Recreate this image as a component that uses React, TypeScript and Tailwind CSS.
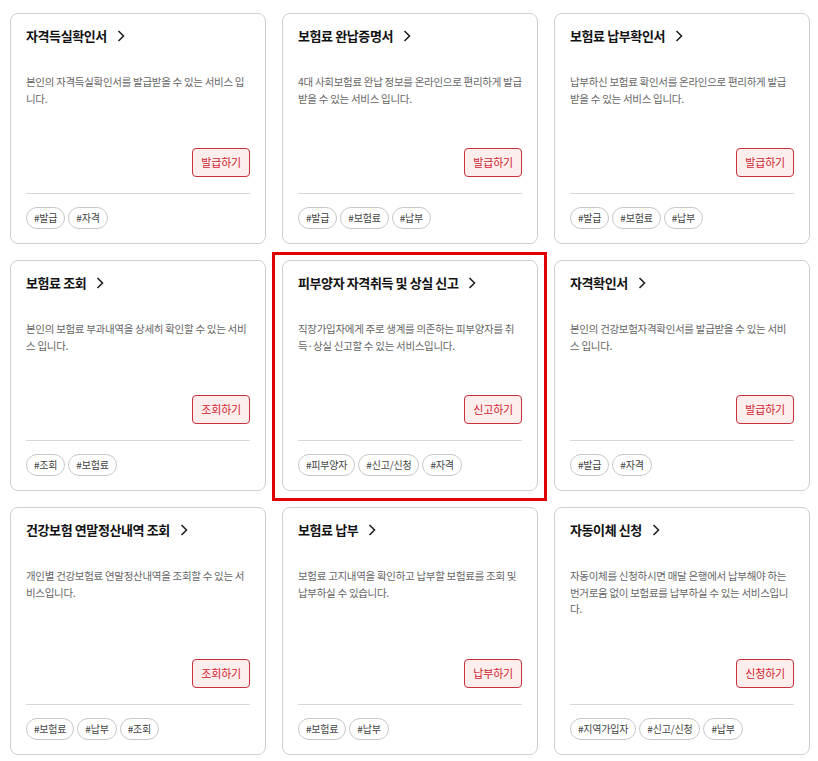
import { ReactNode } from 'react';

type Service = {
  title: string;
  desc: string;
  action: string;
  tags: string[];
  highlight?: boolean;
};

const services: Service[] = [
  { title: '자격득실확인서', desc: '본인의 자격득실확인서를 발급받을 수 있는 서비스 입니다.', action: '발급하기', tags: ['#발급', '#자격'] },
  { title: '보험료 완납증명서', desc: '4대 사회보험료 완납 정보를 온라인으로 편리하게 발급받을 수 있는 서비스 입니다.', action: '발급하기', tags: ['#발급', '#보험료', '#납부'] },
  { title: '보험료 납부확인서', desc: '납부하신 보험료 확인서를 온라인으로 편리하게 발급받을 수 있는 서비스 입니다.', action: '발급하기', tags: ['#발급', '#보험료', '#납부'] },
  { title: '보험료 조회', desc: '본인의 보험료 부과내역을 상세히 확인할 수 있는 서비스 입니다.', action: '조회하기', tags: ['#조회', '#보험료'] },
  { title: '피부양자 자격취득 및 상실 신고', desc: '직장가입자에게 주로 생계를 의존하는 피부양자를 취득·상실 신고할 수 있는 서비스입니다.', action: '신고하기', tags: ['#피부양자', '#신고/신청', '#자격'], highlight: true },
  { title: '자격확인서', desc: '본인의 건강보험자격확인서를 발급받을 수 있는 서비스 입니다.', action: '발급하기', tags: ['#발급', '#자격'] },
  { title: '건강보험 연말정산내역 조회', desc: '개인별 건강보험료 연말정산내역을 조회할 수 있는 서비스입니다.', action: '조회하기', tags: ['#보험료', '#납부', '#조회'] },
  { title: '보험료 납부', desc: '보험료 고지내역을 확인하고 납부할 보험료를 조회 및 납부하실 수 있습니다.', action: '납부하기', tags: ['#보험료', '#납부'] },
  { title: '자동이체 신청', desc: '자동이체를 신청하시면 매달 은행에서 납부해야 하는 번거로움 없이 보험료를 납부하실 수 있는 서비스입니다.', action: '신청하기', tags: ['#지역가입자', '#신고/신청', '#납부'] },
];

function Chevron() {
  return (
    <svg width="8" height="12" viewBox="0 0 8 12" className="ml-[10px] shrink-0">
      <polyline points="1.5,1 6.5,6 1.5,11" fill="none" stroke="#222" strokeWidth="1.6" />
    </svg>
  );
}

function Tag({ children }: { children: ReactNode }) {
  return (
    <span className="h-[22px] px-[7px] flex items-center rounded-full border border-[#c8c8c8] text-[10px] text-[#444] leading-none tracking-[-0.2px]">
      {children}
    </span>
  );
}

function ServiceCard({ s }: { s: Service }) {
  return (
    <div className="relative flex flex-col bg-white border border-[#cfcfcf] rounded-[8px] px-[15px] pt-[12px] pb-[14px]">
      {s.highlight && (
        <div className="absolute -left-[11px] -right-[10px] -top-[9px] -bottom-[11px] border-[3px] border-[#e10000] pointer-events-none" />
      )}
      <div className="flex items-center h-[20px]">
        <h3 className="text-[13px] font-bold text-[#111] tracking-[-0.4px]">{s.title}</h3>
        <Chevron />
      </div>
      <p className="mt-[28px] text-[10.5px] leading-[16.5px] text-[#666] tracking-[-0.3px] break-all">{s.desc}</p>
      <div className="mt-auto pt-[41px]">
        <div className="flex justify-end">
          <button className="h-[29px] px-[8px] rounded-[4px] border border-[#c8313a] bg-[#fdeeee] text-[11px] text-[#d0222c] tracking-[-0.2px]">
            {s.action}
          </button>
        </div>
        <div className="mt-[16px] border-t border-[#d6d6d6]" />
        <div className="mt-[13px] flex gap-[3px]">
          {s.tags.map(t => <Tag key={t}>{t}</Tag>)}
        </div>
      </div>
    </div>
  );
}

export default function App() {
  return (
    <div
      className="bg-white min-h-[761px] pl-[10px] pt-[13px]"
      style={{ fontFamily: '"Noto Sans CJK KR", "Noto Sans", sans-serif' }}
    >
      <div className="grid grid-cols-[repeat(3,256px)] gap-4">
        {services.map(s => <ServiceCard key={s.title} s={s} />)}
      </div>
    </div>
  );
}
